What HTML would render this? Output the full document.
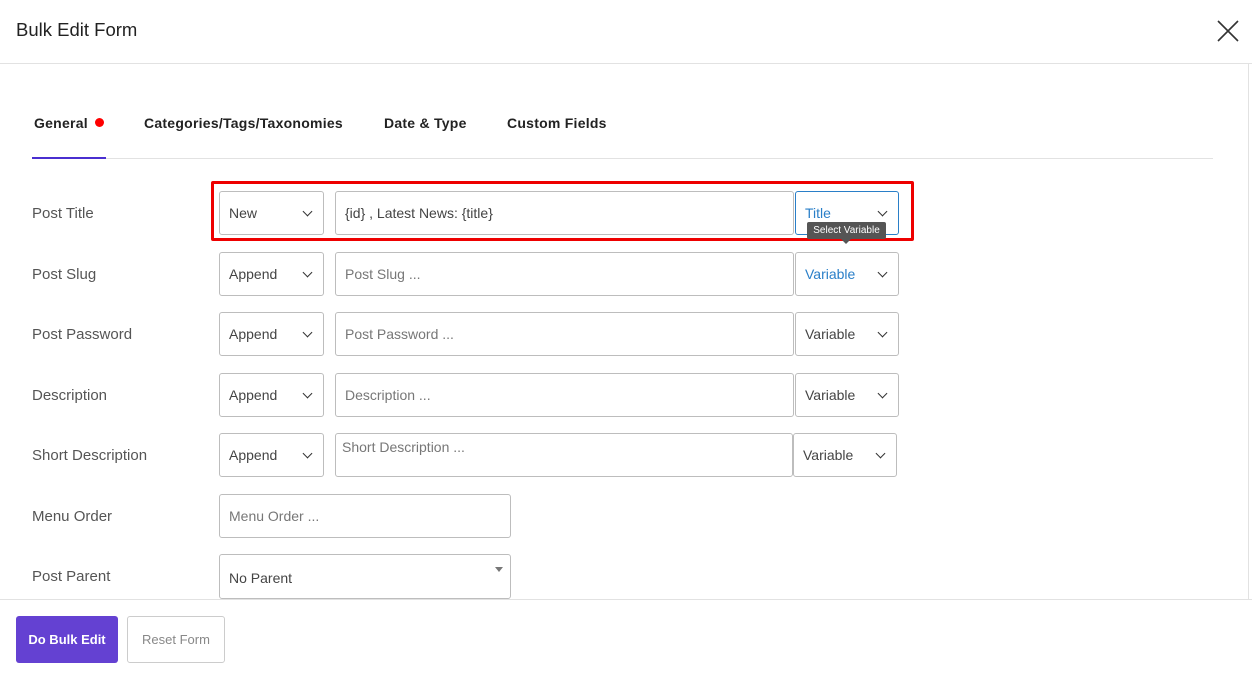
<!DOCTYPE html>
<html><head><style>
*{box-sizing:border-box;margin:0;padding:0}
body{width:1252px;height:678px;background:#fff;font-family:"Liberation Sans",sans-serif;position:relative;overflow:hidden;color:#333}
.a{position:absolute}
.box{position:absolute;border:1px solid #bdbdbd;border-radius:3px;height:44px;font-size:14px;color:#444;padding-left:9px;line-height:42px;background:#fff}
.ph{color:#777}
.chev{position:absolute;right:12px;top:16px;width:7px;height:7px;border-right:1.6px solid #333;border-bottom:1.6px solid #333;transform:rotate(45deg)}
.lbl{position:absolute;left:32px;font-size:15px;color:#555}
.tab{position:absolute;top:115px;font-size:14px;font-weight:bold;color:#222;letter-spacing:0.25px}
</style></head><body>
<div class="a" style="left:16px;top:19px;font-size:18.5px;color:#222">Bulk Edit Form</div>
<svg class="a" style="left:1216px;top:19px" width="24" height="24"><path d="M2 2L22 22M22 2L2 22" stroke="#333" stroke-width="1.6"/></svg>
<div class="a" style="left:0;top:63px;width:1252px;height:1px;background:#e2e2e2"></div>
<div class="a" style="left:1248px;top:64px;width:1px;height:535px;background:#e2e2e2"></div>

<div class="tab" style="left:34px">General</div>
<div class="a" style="left:95px;top:118px;width:9px;height:9px;border-radius:50%;background:#f00"></div>
<div class="tab" style="left:144px">Categories/Tags/Taxonomies</div>
<div class="tab" style="left:384px">Date &amp; Type</div>
<div class="tab" style="left:507px">Custom Fields</div>
<div class="a" style="left:32px;top:158px;width:1181px;height:1px;background:#e2e2e2"></div>
<div class="a" style="left:32px;top:157px;width:74px;height:2px;background:#4a2fd0"></div>

<div class="a" style="left:211px;top:181px;width:703px;height:60px;border:3px solid #e00;border-radius:2px"></div>

<div class="lbl" style="top:205px">Post Title</div>
<div class="box" style="left:219px;top:191px;width:105px">New<span class="chev"></span></div>
<div class="box" style="left:335px;top:191px;width:459px">{id} , Latest News: {title}</div>
<div class="box" style="left:795px;top:191px;width:104px;border-color:#2a7fc8;color:#2a7fc8">Title<span class="chev"></span></div>
<div class="a" style="left:807px;top:222px;width:79px;height:17px;background:#555;border-radius:2px;color:#fff;font-size:10px;line-height:17px;text-align:center">Select Variable</div>
<div class="a" style="left:841px;top:239px;width:0;height:0;border-left:5px solid transparent;border-right:5px solid transparent;border-top:5px solid #555"></div>

<div class="lbl" style="top:266px">Post Slug</div>
<div class="box" style="left:219px;top:252px;width:105px">Append<span class="chev"></span></div>
<div class="box ph" style="left:335px;top:252px;width:459px">Post Slug ...</div>
<div class="box" style="left:795px;top:252px;width:104px;color:#2a7fc8">Variable<span class="chev"></span></div>

<div class="lbl" style="top:326px">Post Password</div>
<div class="box" style="left:219px;top:312px;width:105px">Append<span class="chev"></span></div>
<div class="box ph" style="left:335px;top:312px;width:459px">Post Password ...</div>
<div class="box" style="left:795px;top:312px;width:104px">Variable<span class="chev"></span></div>

<div class="lbl" style="top:387px">Description</div>
<div class="box" style="left:219px;top:373px;width:105px">Append<span class="chev"></span></div>
<div class="box ph" style="left:335px;top:373px;width:459px">Description ...</div>
<div class="box" style="left:795px;top:373px;width:104px">Variable<span class="chev"></span></div>

<div class="lbl" style="top:447px">Short Description</div>
<div class="box" style="left:219px;top:433px;width:105px">Append<span class="chev"></span></div>
<div class="box ph" style="left:335px;top:433px;width:458px;line-height:26px;padding-left:6px">Short Description ...</div>
<div class="box" style="left:793px;top:433px;width:104px">Variable<span class="chev"></span></div>

<div class="lbl" style="top:508px">Menu Order</div>
<div class="box ph" style="left:219px;top:494px;width:292px">Menu Order ...</div>

<div class="lbl" style="top:568px">Post Parent</div>
<div class="box" style="left:219px;top:554px;width:292px;height:45px;line-height:46px">No Parent</div>
<div class="a" style="left:495px;top:567px;border-left:4px solid transparent;border-right:4px solid transparent;border-top:5px solid #777"></div>

<div class="a" style="left:0;top:599px;width:1252px;height:1px;background:#e2e2e2"></div>
<div class="a" style="left:16px;top:616px;width:102px;height:47px;background:#6441d2;border-radius:3px;color:#fff;font-size:13px;font-weight:bold;text-align:center;line-height:47px">Do Bulk Edit</div>
<div class="a" style="left:127px;top:616px;width:98px;height:47px;border:1px solid #ccc;border-radius:3px;color:#888;font-size:13px;text-align:center;line-height:45px">Reset Form</div>
</body></html>
